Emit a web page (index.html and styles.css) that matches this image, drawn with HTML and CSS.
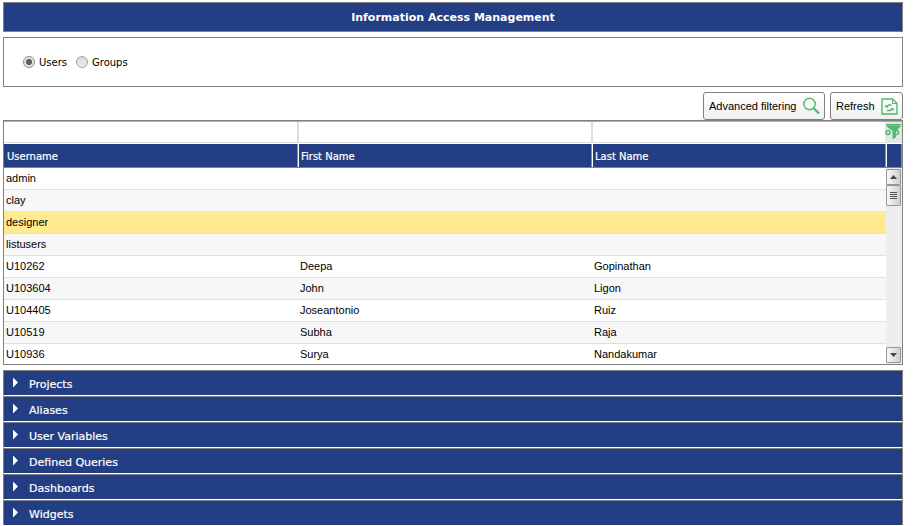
FILE: index.html
```
<!DOCTYPE html>
<html lang="en">
<head>
<meta charset="utf-8">
<title>Information Access Management</title>
<link rel="stylesheet" href="styles.css">
</head>
<body>
<main class="page">
  <h1 class="title"><span>Information Access Management</span></h1>
  <section class="mode">
    <span class="radio on"></span><span class="mode-label users">Users</span>
    <span class="radio"></span><span class="mode-label groups">Groups</span>
  </section>
  <div class="toolbar">
    <button class="btn advanced"><span>Advanced filtering</span>
      <svg width="18" height="18" viewBox="0 0 18 18" fill="none" stroke="#50b974"><circle cx="7.500" cy="7" r="5.700" stroke-width="1.500"/><path d="M11.500 11l5.500 5.500" stroke-width="2.300"/></svg>
    </button>
    <button class="btn refresh"><span>Refresh</span>
      <svg width="17" height="17" viewBox="0 0 17 17" fill="none" stroke="#50b974" stroke-width="1.400"><path d="M1 1h10.500L16 5.500V16H1z"/><path d="M11.500 1v4.500H16" stroke-width="1"/><path d="M5 8.800l3-1.800h2.500M12 10.700l-3 1.800H6" stroke-width="1.600"/><path d="M4.300 6.500v3h3zM12.700 13v-3h-3z" fill="#50b974" stroke="none"/></svg>
    </button>
  </div>
  <section class="grid">
    <div class="filters"><div></div><div></div><div></div>
      <div class="funnel"><svg width="16" height="17" viewBox="0 0 16 17"><path d="M1 1h15v2l-5 5v6.500L7.500 16V8L1 3z" fill="#50b974"/><path d="M1 2.500h15" stroke="#7bcb94" stroke-width=".8"/><g fill="none" stroke="#50b974" stroke-width="1.600"><circle cx="3" cy="9.500" r="2"/><circle cx="11.500" cy="9.500" r="2"/></g><path d="M11 8.500h1v2h-1z" fill="#d9eadf"/></svg></div>
    </div>
    <div class="heads"><div>Username</div><div>First Name</div><div>Last Name</div><div></div></div>
    <div class="body">
      <div class="rows">
        <div class="row"><span>admin</span><span></span><span></span></div>
        <div class="row"><span>clay</span><span></span><span></span></div>
        <div class="row selected"><span>designer</span><span></span><span></span></div>
        <div class="row"><span>listusers</span><span></span><span></span></div>
        <div class="row"><span>U10262</span><span>Deepa</span><span>Gopinathan</span></div>
        <div class="row"><span>U103604</span><span>John</span><span>Ligon</span></div>
        <div class="row"><span>U104405</span><span>Joseantonio</span><span>Ruiz</span></div>
        <div class="row"><span>U10519</span><span>Subha</span><span>Raja</span></div>
        <div class="row"><span>U10936</span><span>Surya</span><span>Nandakumar</span></div>
      </div>
      <div class="scroll">
        <div class="sbtn"><svg width="7" height="4" viewBox="0 0 7 4"><path d="M0 4L3.500 0L7 4z" fill="#444"/></svg></div>
        <div class="thumb"><i></i><i></i><i></i><i></i></div>
        <div class="sbtn down"><svg width="7" height="4" viewBox="0 0 7 4"><path d="M0 0L3.500 4L7 0z" fill="#444"/></svg></div>
      </div>
    </div>
  </section>
  <section class="accordion">
    <div class="panel"><i></i><span>Projects</span></div>
    <div class="panel"><i></i><span>Aliases</span></div>
    <div class="panel"><i></i><span>User Variables</span></div>
    <div class="panel"><i></i><span>Defined Queries</span></div>
    <div class="panel"><i></i><span>Dashboards</span></div>
    <div class="panel"><i></i><span>Widgets</span></div>
  </section>
</main>
</body>
</html>
```
FILE: styles.css
```
* { box-sizing: border-box; }
html, body { height: 100%; }
body { margin: 0; background: #fff; overflow: hidden; font-family: "DejaVu Sans", sans-serif; font-size: 11px; color: #000; }
.page { width: 903px; height: 525px; padding: 2px 0 0 3px; overflow: hidden; }
.title { margin: 0 0 5px; height: 30px; border: 1px solid #808080; background: #233e82; color: #fff; font-size: 11px; line-height: 29px; font-weight: bold; text-align: center; }
.mode { height: 50px; border: 1px solid #808080; display: flex; align-items: center; padding-left: 19px; }
.radio { width: 12px; height: 12px; border: 1px solid #a4a4a4; border-radius: 50%; background: linear-gradient(#d6d6d6, #eee); }
.radio.on { background: radial-gradient(circle, #606060 0 2.700px, #e4e4e4 3.400px); border-color: #8c8c8c; }
.mode-label { font-size: 10px; line-height: 14px; margin-left: 4px; padding-top: 2px; }
.users { width: 37px; }
.toolbar { display: flex; justify-content: flex-end; gap: 5px; margin-top: 5px; height: 28px; }
.btn { display: flex; align-items: center; justify-content: space-between; height: 28px; border: 1px solid #808080; border-radius: 3px; padding: 0 4px 0 5px; background: linear-gradient(#fff, #f0f0f0); font: 11px "Liberation Sans", sans-serif; color: #000; }
.advanced { width: 122px; }
.refresh { width: 73px; }
.grid { height: 245px; border: 1px solid #808080; }
.filters, .heads { display: grid; grid-template-columns: 295px 294px 294px 15px; }
.filters { height: 23px; border-top: 1px solid #b0b0b0; border-bottom: 1px solid #fff; }
.filters div { border-right: 2px solid #dcdfe5; border-bottom: 1px solid #dcdfe5; }
.filters .funnel { background: #e5e5e5; border: 0; display: flex; align-items: flex-start; margin-left: -2px; padding-top: 1px; }
.heads { height: 24px; border-bottom: 1px solid #808080; background: #233e82; color: #fff; font-size: 10px; line-height: 25px; -webkit-text-stroke: .2px #fff; }
.heads div { padding-left: 2px; height: 23px; border-right: 1px solid #fff; box-shadow: inset -1px 0 #8a8d98; }
.heads div:first-child { padding-left: 3px; }
.heads div:last-child { border: 0; }
.body { height: 196px; display: flex; overflow: hidden; }
.rows { width: 882px; }
.row { display: grid; grid-template-columns: 294px 294px 294px; height: 22px; border-bottom: 1px solid #e0e0e0; font: 11px/20px "Liberation Sans", sans-serif; }
.row span { padding-left: 2px; }
.row:nth-child(even) { background: #f7f7f7; }
.row.selected { background: #ffe991; box-shadow: 0 -1px #ffe991; }
.scroll { width: 16px; height: 196px; padding: 1px 1px 1px 0; background: #eee; display: flex; flex-direction: column; }
.sbtn, .thumb { width: 15px; flex: none; border: 1px solid #969696; border-radius: 1px; background: linear-gradient(90deg, #f8f8f8, #cfcfcf); display: flex; align-items: center; justify-content: center; }
.sbtn { height: 16px; }
.thumb { height: 21px; flex-direction: column; gap: 1px; }
.thumb i { width: 7px; height: 1px; background: #555; }
.down { margin-top: auto; }
.accordion { margin-top: 5px; }
.panel { height: 26px; display: flex; align-items: center; padding-left: 9px; background: #233e82; color: #fff; border: 1px solid #808080; border-bottom-color: #fff; -webkit-text-stroke: .2px #fff; }
.panel i { width: 5px; height: 10px; background: #fff; clip-path: polygon(0 0, 100% 50%, 0 100%); margin-top: -1px; }
.panel span { margin-left: 11px; padding-top: 4px; line-height: 14px; }
```
